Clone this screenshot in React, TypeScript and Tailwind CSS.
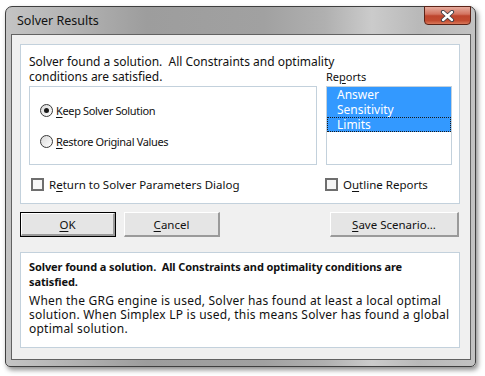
import React from "react";

const ui = "font-['Noto_Sans',sans-serif] text-[12px] text-[#111]";

function Key({ children }: { children: React.ReactNode }) {
  return <span className="underline underline-offset-[2px]">{children}</span>;
}

function Radio({ checked, children }: { checked?: boolean; children: React.ReactNode }) {
  return (
    <div className="flex h-[15px] items-center gap-[3px]">
      <span className="flex h-[13px] w-[13px] items-center justify-center rounded-full border border-[#3a3a3a] bg-[linear-gradient(135deg,#d8d8d8,#ffffff)]">
        {checked ? <span className="h-[5px] w-[5px] rounded-full bg-[#1a1a1a]" /> : null}
      </span>
      <span className="text-[11px] leading-[15px] tracking-[-0.35px]">{children}</span>
    </div>
  );
}

function Check({ children }: { children: React.ReactNode }) {
  return (
    <div className="flex h-[15px] items-center gap-[5px]">
      <span className="h-[13px] w-[13px] border-2 border-[#6e6e6e] bg-[#f6f6f6]" />
      <span className="text-[11.5px] leading-[15px]">{children}</span>
    </div>
  );
}

function Button({
  children,
  width,
  isDefault,
}: {
  children: React.ReactNode;
  width: string;
  isDefault?: boolean;
}) {
  return (
    <div className={`${width} h-[25px] ${isDefault ? "border border-black" : ""}`}>
      <div className="flex h-full w-full items-center justify-center border-t border-l border-r-2 border-b-2 border-t-white border-l-white border-r-[#9a9a9a] border-b-[#9a9a9a] bg-[#e5e5e5] text-[11.5px] leading-[15px]">
        {children}
      </div>
    </div>
  );
}

export default function App() {
  return (
    <div className={`h-[376px] w-[485px] bg-white pl-[5px] pt-[6px] ${ui}`}>
      <div className="relative h-[361px] w-[471px] rounded-t-[7px] rounded-b-[5px] border border-[#3f3f3f] bg-[linear-gradient(90deg,#c4c4c4_0%,#b3b3b3_14%,#9d9d9d_30%,#a1a1a1_55%,#b0b0b0_68%,#cbcbcb_78%,#b9b9b9_88%,#c2c2c2_100%)] pl-[5px] pr-[4px] shadow-[2px_3px_5px_rgba(0,0,0,0.45)]">
        <div className="flex h-[27px] items-center pl-[6px] pt-[1px] text-[12.5px] text-[#111]">Solver Results</div>

        <div className="absolute right-[4px] top-[-1px] flex h-[19px] w-[47px] items-center justify-center rounded-b-[4px] border border-[#5b2317] bg-[linear-gradient(180deg,#e6ab9d_0%,#d3735f_42%,#be452d_52%,#c24b30_80%,#d9785a_100%)]">
          <svg width="15" height="12" viewBox="0 0 15 12">
            <path d="M3 2 L12 10 M12 2 L3 10" stroke="#3b3b44" strokeWidth="4.2" strokeLinecap="round" />
            <path d="M3 2 L12 10 M12 2 L3 10" stroke="#ffffff" strokeWidth="2.4" strokeLinecap="round" />
          </svg>
        </div>

        <div className="h-[326px] w-[460px] border border-[#626262] bg-[#f0f0f0] pl-[8px] pt-[9px]">
          <div className="h-[160px] w-[440px] border border-[#c3d1dc] bg-white pl-[8px] pt-[9px]">
            <p className="leading-[15px]">Solver found a solution.&nbsp; All Constraints and optimality</p>
            <div className="flex">
              <div className="w-[288px]">
                <p className="leading-[15px]">conditions are satisfied.</p>
                <div className="mt-[2px] h-[79px] border border-[#c3d1dc] pl-[10px] pt-[16px]">
                  <Radio checked>
                    <Key>K</Key>eep Solver Solution
                  </Radio>
                  <div className="mt-[16px]">
                    <Radio>
                      <Key>R</Key>estore Original Values
                    </Radio>
                  </div>
                </div>
              </div>
              <div className="ml-[9px] w-[126px]">
                <p className="text-[11px] leading-[15px]">
                  Re<Key>p</Key>orts
                </p>
                <div className="mt-[2px] h-[79px] border border-[#c3d1dc] bg-white">
                  <div className="bg-[#3399ff] text-white">
                    <div className="h-[15px] pl-[10px] leading-[15px]">Answer</div>
                    <div className="h-[15px] pl-[10px] leading-[15px]">Sensitivity</div>
                    <div className="h-[15px] pl-[10px] leading-[15px] outline-1 -outline-offset-1 outline-dotted outline-[#1a1a1a]">
                      Limits
                    </div>
                  </div>
                </div>
              </div>
            </div>
            <div className="mt-[12px] flex">
              <div className="w-[296px] pl-[2px]">
                <Check>
                  R<Key>e</Key>turn to Solver Parameters Dialog
                </Check>
              </div>
              <Check>
                O<Key>u</Key>tline Reports
              </Check>
            </div>
          </div>

          <div className="mt-[8px] flex w-[440px]">
            <Button width="w-[96px]" isDefault>
              <Key>O</Key>K
            </Button>
            <div className="ml-[8px]">
              <Button width="w-[96px]">
                <Key>C</Key>ancel
              </Button>
            </div>
            <div className="ml-auto mr-[1px]">
              <Button width="w-[129px]">
                <Key>S</Key>ave Scenario...
              </Button>
            </div>
          </div>

          <div className="mt-[15px] h-[96px] w-[440px] border border-[#c3d1dc] bg-white pl-[8px] pt-[6px]">
            <p className="text-[11px] font-bold leading-[15px] tracking-[-0.1px]">
              Solver found a solution.&nbsp; All Constraints and optimality conditions are
              <br />
              satisfied.
            </p>
            <p className="mt-[5px] leading-[14px] tracking-[0.22px]">
              When the GRG engine is used, Solver has found at least a local optimal
              <br />
              solution. When Simplex LP is used, this means Solver has found a global
              <br />
              optimal solution.
            </p>
          </div>
        </div>
      </div>
    </div>
  );
}
